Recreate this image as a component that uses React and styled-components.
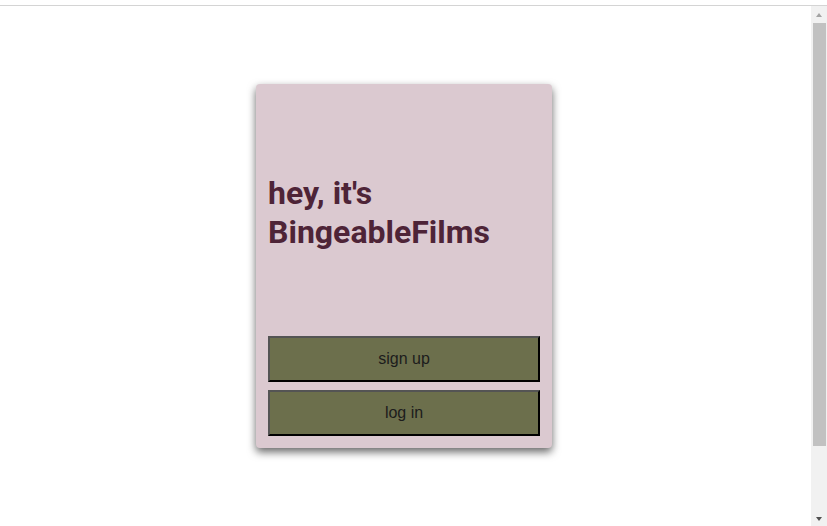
import React from 'react';
import styled, { createGlobalStyle } from 'styled-components';

const GlobalStyle = createGlobalStyle`
  html, body {
    margin: 0;
    padding: 0;
    height: 100%;
    overflow: hidden;
    background: #fff;
  }
`;

const Frame = styled.div`
  display: flex;
  flex-direction: column;
  height: 526px;
`;

const TopEdge = styled.div`
  height: 5px;
  border-bottom: 1px solid #d4d4d4;
  flex-shrink: 0;
`;

const Body = styled.div`
  flex: 1;
  display: flex;
  min-height: 0;
`;

const Page = styled.div`
  flex: 1;
  display: flex;
  justify-content: center;
  align-items: flex-start;
  padding: 78px 3px 0 0;
  overflow: hidden;
`;

// classic scrollbar drawn as a rail beside the page
const Rail = styled.div`
  width: 16px;
  flex-shrink: 0;
  display: flex;
  flex-direction: column;
  background: #f1f1f1;
`;

const RailButton = styled.div`
  height: 17px;
  display: flex;
  align-items: center;
  justify-content: center;
  flex-shrink: 0;
`;

const Arrow = styled.span`
  width: 0;
  height: 0;
  border-left: 3.5px solid transparent;
  border-right: 3.5px solid transparent;
  ${({ $down }) =>
    $down
      ? 'border-top: 4px solid #505050; margin-top: 3px;'
      : 'border-bottom: 4px solid #a3a3a3; margin-top: 1px;'}
`;

const Track = styled.div`
  flex: 1;
`;

const Thumb = styled.div`
  height: 423px;
  margin: 0 1px 0 2px;
  background: #c1c1c1;
`;

const Card = styled.div`
  width: 296px;
  height: 364px;
  box-sizing: border-box;
  padding: 12px;
  background: #dbc9d0;
  border-radius: 4px;
  box-shadow: 0 4px 9px rgba(0, 0, 0, 0.6);
  display: flex;
  flex-direction: column;
`;

const Hero = styled.div`
  flex: 1;
  display: flex;
  align-items: center;
`;

const Title = styled.h1`
  margin: 0 0 6px;
  font-family: Roboto, 'Noto Sans', sans-serif;
  font-weight: 700;
  font-size: 32px;
  line-height: 39px;
  color: #4e2437;
`;

const Actions = styled.div`
  display: flex;
  flex-direction: column;
  gap: 8px;
`;

const Button = styled.button`
  height: 46px;
  width: 100%;
  background: #6c6f4c;
  border: 2px outset #000;
  font-family: 'Liberation Sans', Arial, sans-serif;
  font-size: 16px;
  color: #1c1c1c;
  cursor: pointer;
`;

export default function App() {
  return (
    <>
      <GlobalStyle />
      <Frame>
        <TopEdge />
        <Body>
          <Page>
            <Card>
              <Hero>
                <Title>
                  hey, it's
                  <br />
                  BingeableFilms
                </Title>
              </Hero>
              <Actions>
                <Button>sign up</Button>
                <Button>log in</Button>
              </Actions>
            </Card>
          </Page>
          <Rail>
            <RailButton>
              <Arrow />
            </RailButton>
            <Track>
              <Thumb />
            </Track>
            <RailButton>
              <Arrow $down />
            </RailButton>
          </Rail>
        </Body>
      </Frame>
    </>
  );
}
